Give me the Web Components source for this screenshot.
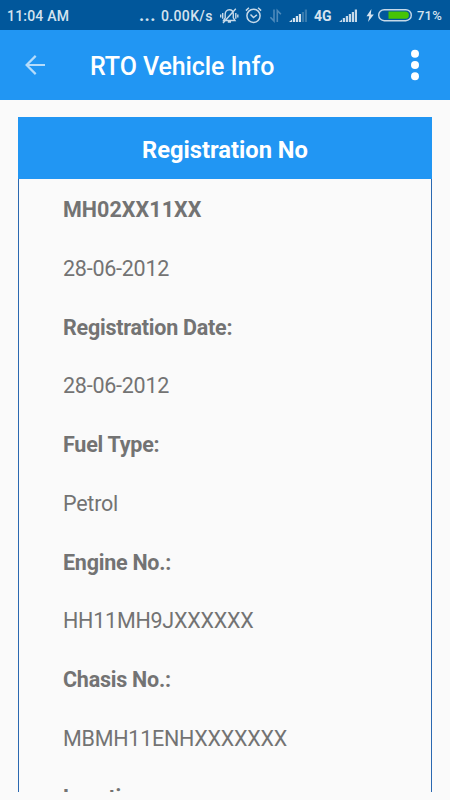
<!DOCTYPE html>
<html lang="en">
<head>
<meta charset="utf-8">
<title>RTO Vehicle Info</title>
<style>
    body {
        margin: 0;
        background: #fafafa;
        font-family: Roboto, sans-serif;
    }
</style>
</head>
<body>
<vehicle-app></vehicle-app>

<script>
class StatusBar extends HTMLElement {
    css = `
    :host {
        display: flex;
        align-items: center;
        box-sizing: border-box;
        height: 30px;
        padding: 1px 8px 0 7px;
        background: #01579b;
        color: #d5e3ef;
        font-size: 14px;
        font-weight: 500;
        line-height: 30px;
        white-space: nowrap;
    }

    .time {
        flex-grow: 1;
        letter-spacing: 0.2px;
    }

    .dots {
        width: 22px;
        font-size: 18px;
        font-weight: 700;
        letter-spacing: 0.4px;
        line-height: 26px;
        margin-bottom: 2px;
    }

    .speed {
        width: 58px;
        letter-spacing: 0.35px;
    }

    .network {
        width: 26px;
        padding-left: 1px;
        box-sizing: border-box;
        font-weight: 700;
    }

    .battery {
        font-size: 13px;
        width: 25px;
        letter-spacing: 0.2px;
    }

    svg {
        display: block;
        flex-shrink: 0;
    }
    `

    template = () => {
        return `
        <span class="time">11:04 AM</span>
        <span class="dots">...</span>
        <span class="speed">0.00K/s</span>
        <svg width="26" height="20" viewBox="0 0 26 20" fill="none" stroke="#c6d9e9" stroke-width="1.4">
            <path d="M4.5 14.5h11.5l-1.7-2.7V8.2c0-2.4-1.4-4.4-4-4.4s-4.1 2-4.1 4.4v3.6zM8.8 16h3.2M3.7 7v5.8M1.7 8.5v3M16.8 7v5.8M18.8 8.5v3M4 17L16.8 2.8"/>
        </svg>
        <svg width="24" height="20" viewBox="0 0 24 20" fill="none" stroke="#c6d9e9" stroke-width="1.5">
            <circle cx="8.5" cy="9.8" r="6.6"/>
            <path d="M5.5 8.5l3 3 3.4-2.6M.9 4.6l3-2.8M16.1 4.6l-3-2.8"/>
        </svg>
        <svg width="20" height="20" viewBox="0 0 20 20" fill="none" stroke="#4e8abb" stroke-width="1.6">
            <path d="M5 3.5v11.5L1.4 11.2M8.3 16V4.5l3.6 3.8"/>
        </svg>
        <svg width="24" height="20" viewBox="0 0 24 20">
            <path fill="#d5e3ef" d="M0 16l3-2.5v2.5zM3.8 12h2.2v4H3.8zM6.8 10h2.2v6H6.8zM9.8 8h2.2v8h-2.2z"/>
            <path fill="#397bae" d="M12.8 6h2.2v10h-2.2zM15.8 3.5h2.2v12.5h-2.2z"/>
        </svg>
        <span class="network">4G</span>
        <svg width="27" height="20" viewBox="0 0 27 20" fill="#c6d9e9">
            <path d="M0 16l3-2.5v2.5zM3.8 12h2.2v4H3.8zM6.8 10h2.2v6H6.8zM9.8 8h2.2v8h-2.2zM12.8 6h2.2v10h-2.2zM15.8 3.5h2.2v12.5h-2.2z"/>
        </svg>
        <svg width="12" height="20" viewBox="0 0 12 20" fill="#d5e3ef">
            <path d="M5.4 3L.5 10.2h2.8L2 16l5.8-7.6H4.8z"/>
        </svg>
        <svg width="39" height="20" viewBox="0 0 39 20">
            <rect x=".7" y="3.7" width="32.6" height="11" rx="5.5" fill="none" stroke="#c6d9e9" stroke-width="1.4"/>
            <path fill="#46c404" d="M10.5 5.6h16.8a3.6 3.6 0 0 1 0 7.2H10.5z"/>
        </svg>
        <span class="battery">71%</span>
        `;
    }

    constructor() {
        super();

        this.attachShadow({ mode: "open" });
        this.shadowRoot.innerHTML = `
        <style>${this.css.trim()}</style>
        ${this.template().trim()}
        `
    }
}

class AppToolbar extends HTMLElement {
    css = `
    :host {
        display: flex;
        align-items: center;
        box-sizing: border-box;
        height: 70px;
        padding: 0 29px 0 25px;
        background: #2196f3;
        color: #ffffff;
    }

    .title {
        flex-grow: 1;
        margin: 3px 0 0 45px;
        font-size: 25px;
        font-weight: 500;
        letter-spacing: -0.08px;
        line-height: 30px;
        white-space: nowrap;
    }

    svg {
        display: block;
    }
    `

    template = () => {
        return `
        <svg width="20" height="20" viewBox="0 0 20 20" fill="none" stroke="#b5dcfb" stroke-width="2.2">
            <path d="M20 10H2M10.7 .9L1.6 10l9.1 9.1"/>
        </svg>
        <div class="title"><slot></slot></div>
        <svg width="12" height="32" viewBox="0 0 12 32" fill="#ffffff">
            <circle cx="6" cy="4.7" r="4"/>
            <circle cx="6" cy="16" r="4"/>
            <circle cx="6" cy="27.3" r="4"/>
        </svg>
        `;
    }

    constructor() {
        super();

        this.attachShadow({ mode: "open" });
        this.shadowRoot.innerHTML = `
        <style>${this.css.trim()}</style>
        ${this.template().trim()}
        `
    }
}

class InfoCard extends HTMLElement {
    css = `
    :host {
        display: flex;
        flex-direction: column;
        overflow: hidden;
    }

    .header {
        flex-shrink: 0;
        height: 62px;
        background: #2196f3;
        color: #ffffff;
        font-size: 23.7px;
        font-weight: 700;
        line-height: 66px;
        text-align: center;
    }

    .rows {
        flex-grow: 1;
        overflow: hidden;
        min-height: 0;
        padding: 2px 0 0 44px;
        border: solid #2b68b0;
        border-width: 0 1px;
    }
    `

    template = () => {
        return `
        <div class="header"><slot name="header"></slot></div>
        <div class="rows"><slot></slot></div>
        `;
    }

    constructor() {
        super();

        this.attachShadow({ mode: "open" });
        this.shadowRoot.innerHTML = `
        <style>${this.css.trim()}</style>
        ${this.template().trim()}
        `
    }
}

class InfoRow extends HTMLElement {
    css = `
    :host {
        display: block;
        height: 58.75px;
        color: #737373;
        font-size: 21.5px;
        letter-spacing: -0.24px;
        line-height: 58.75px;
        white-space: nowrap;
    }

    :host([label]) {
        font-weight: 700;
    }

    :host([number]) {
        letter-spacing: 0.05px;
    }
    `

    constructor() {
        super();

        this.attachShadow({ mode: "open" });
        this.shadowRoot.innerHTML = `
        <style>${this.css.trim()}</style>
        <slot></slot>
        `
    }
}

class VehicleApp extends HTMLElement {
    css = `
    :host {
        display: flex;
        flex-direction: column;
        width: 450px;
        height: 800px;
        overflow: hidden;
        background: #fafafa;
    }

    status-bar, app-toolbar {
        flex-shrink: 0;
    }

    info-card {
        flex: 1 1 0;
        min-height: 0;
        margin: 17px 18px 8px;
    }
    `

    template = () => {
        return `
        <status-bar></status-bar>
        <app-toolbar>RTO Vehicle Info</app-toolbar>
        <info-card>
            <span slot="header">Registration No</span>
            <info-row label number>MH02XX11XX</info-row>
            <info-row>28-06-2012</info-row>
            <info-row label>Registration Date:</info-row>
            <info-row>28-06-2012</info-row>
            <info-row label>Fuel Type:</info-row>
            <info-row>Petrol</info-row>
            <info-row label>Engine No.:</info-row>
            <info-row>HH11MH9JXXXXXX</info-row>
            <info-row label>Chasis No.:</info-row>
            <info-row>MBMH11ENHXXXXXXX</info-row>
            <info-row label>Location:</info-row>
        </info-card>
        `;
    }

    constructor() {
        super();

        this.attachShadow({ mode: "open" });
        this.shadowRoot.innerHTML = `
        <style>${this.css.trim()}</style>
        ${this.template().trim()}
        `
    }
}

customElements.define('status-bar', StatusBar)
customElements.define('app-toolbar', AppToolbar)
customElements.define('info-row', InfoRow)
customElements.define('info-card', InfoCard)
customElements.define('vehicle-app', VehicleApp)
</script>
</body>
</html>
